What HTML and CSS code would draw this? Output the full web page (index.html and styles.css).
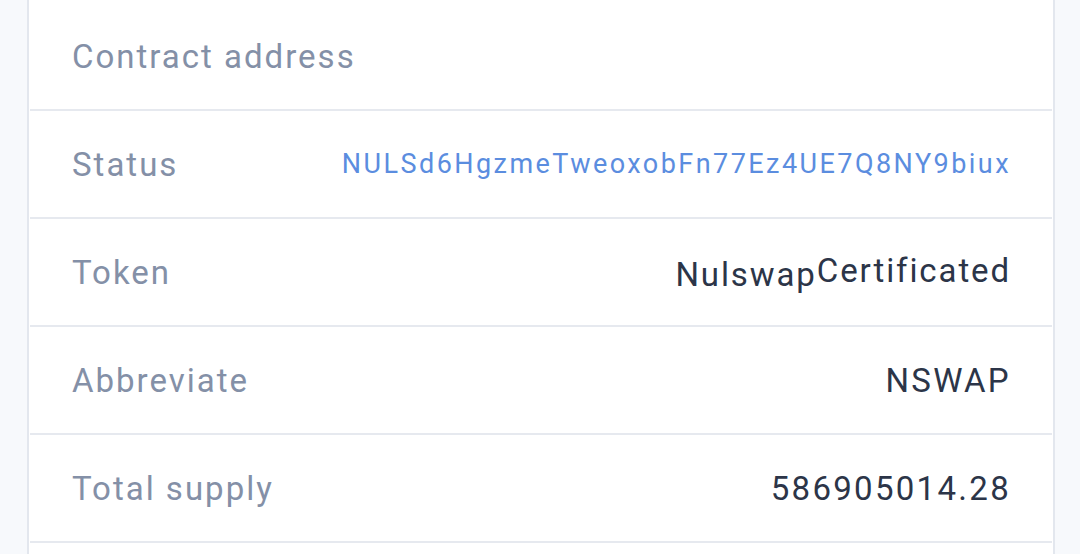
FILE: index.html
```html
<!DOCTYPE html>
<html lang="en">
<head>
    <meta charset="UTF-8">
    <meta name="viewport" content="width=device-width, initial-scale=1.0">
    <title>Token details</title>
    <link rel="stylesheet" href="styles.css">
</head>
<body>
    <main class="page">
        <section class="card">
            <div class="row">
                <span class="label">Contract address</span>
            </div>
            <div class="row">
                <span class="label">Status</span>
                <a class="value link" href="#">NULSd6HgzmeTweoxobFn77Ez4UE7Q8NY9biux</a>
            </div>
            <div class="row">
                <span class="label">Token</span>
                <span class="value token"><span class="drop">Nulswap</span>Certificated</span>
            </div>
            <div class="row">
                <span class="label">Abbreviate</span>
                <span class="value">NSWAP</span>
            </div>
            <div class="row">
                <span class="label">Total supply</span>
                <span class="value">586905014.28</span>
            </div>
            <div class="row"></div>
        </section>
    </main>
</body>
</html>
```

FILE: styles.css
```css
body {
    margin: 0;
    padding: 0;
    background-color: #f7f9fc;
    font-family: Roboto, "Liberation Sans", sans-serif;
    overflow: hidden;
}

.page {
    padding: 0 25px 0 27px;
}

.card {
    background-color: #fff;
    border-left: 2px solid #e3e7ee;
    border-right: 2px solid #e3e7ee;
    padding-top: 3px;
}

.row {
    height: 106px;
    display: flex;
    align-items: center;
    justify-content: space-between;
    padding: 0 41px 0 42px;
    border-bottom: 2px solid #e6e9ef;
    margin: 0 1px;
}

.label {
    font-size: 33px;
    letter-spacing: 2px;
    color: #8490a7;
}

.value {
    font-size: 33px;
    letter-spacing: 2.3px;
    color: #2c3548;
}

.value.token {
    letter-spacing: 1.9px;
}

.value .drop {
    vertical-align: -4px;
}

.link {
    font-size: 27px;
    letter-spacing: 2.45px;
    color: #5b8ddf;
    text-decoration: none;
}
```
